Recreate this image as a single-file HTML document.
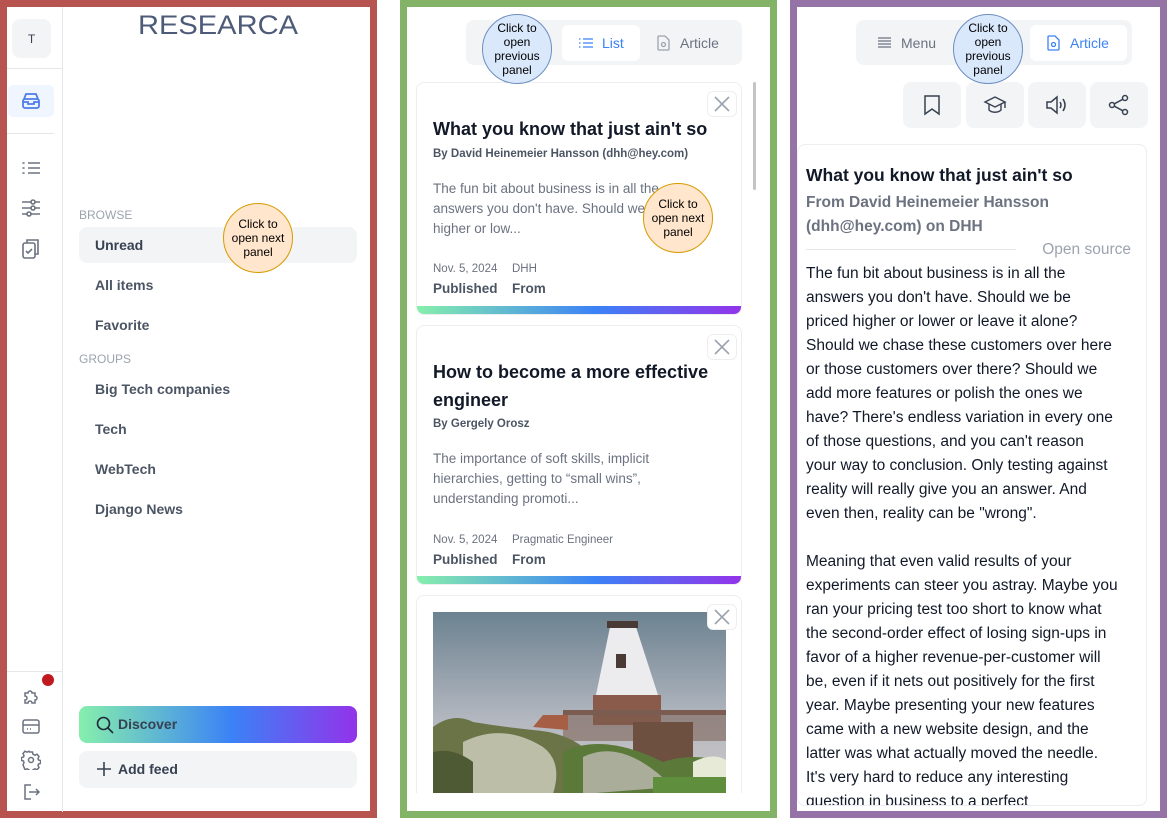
<!DOCTYPE html>
<html><head><meta charset="utf-8">
<style>
*{margin:0;padding:0;box-sizing:border-box}
body{width:1167px;height:819px;overflow:hidden;background:#fff;font-family:"Liberation Sans",sans-serif;position:relative}
.a{position:absolute}
.nw{white-space:nowrap}
.frame{position:absolute;border:7px solid}
.tip{position:absolute;width:70px;height:70px;border-radius:50%;display:flex;align-items:center;justify-content:center;text-align:center;font-size:12px;line-height:14px;color:#000}
.or{background:#ffe6cc;border:1px solid #d79b00}
.bl{background:#dae8fc;border:1px solid #6c8ebf}
.nav{position:absolute;left:95px;font-size:14px;font-weight:bold;color:#4b5563}
.sec{position:absolute;left:79px;font-size:12px;color:#9ca3af}
.card{position:absolute;left:416px;width:326px;border:1px solid #eceef1;border-radius:8px;overflow:hidden;background:#fff}
.bar{position:absolute;left:0;right:0;bottom:0;height:8px;background:linear-gradient(90deg,#86efac,#3b82f6 55%,#9333ea)}
.x{position:absolute;width:30px;height:26px;border:1px solid #eee;border-radius:6px;background:#fff}
.ib{position:absolute;top:82px;width:58px;height:46px;background:#f3f4f6;border-radius:8px;display:flex;align-items:center;justify-content:center}
.body p{font-size:15.5px;line-height:24px;color:#111827;white-space:nowrap}
</style></head><body>
<div class="frame" style="left:0;top:0;width:377px;height:818px;border-color:#b85450"></div>
<div class="frame" style="left:400px;top:0;width:377px;height:818px;border-color:#82b366"></div>
<div class="frame" style="left:790px;top:0;width:377px;height:818px;border-color:#9673a6"></div>

<!-- LEFT rail -->
<div class="a" style="left:62px;top:7px;width:1px;height:805px;background:#e5e7eb"></div>
<div class="a" style="left:12px;top:19px;width:39px;height:39px;background:#f3f4f6;border-radius:8px;font-size:12px;color:#374151;display:flex;align-items:center;justify-content:center">T</div>
<div class="a" style="left:7px;top:68px;width:55px;height:1px;background:#e5e7eb"></div>
<div class="a" style="left:8px;top:85px;width:46px;height:32px;background:#eff6ff;border-radius:5px"></div>
<svg class="a" style="left:21px;top:92px" width="20" height="18" viewBox="0 0 20 18" fill="none" stroke="#4f7ce8" stroke-width="1.8"><path d="M3 7 L5 2 H15 L17 7"/><rect x="2" y="7" width="16" height="9" rx="2"/><path d="M2 10 H7 V12 H13 V10 H18"/></svg>
<div class="a" style="left:7px;top:133px;width:47px;height:1px;background:#e5e7eb"></div>
<svg class="a" style="left:21px;top:160px" width="20" height="16" fill="none" stroke="#6b7280" stroke-width="1.6"><path d="M7 3H19M7 8H19M7 13H19"/><path d="M2 3h1M2 8h1M2 13h1" stroke-linecap="round"/></svg>
<svg class="a" style="left:21px;top:199px" width="20" height="18" fill="none" stroke="#6b7280" stroke-width="1.6"><path d="M1 3H19M1 9H19M1 15H19"/><circle cx="12" cy="3" r="2" fill="#fff"/><circle cx="12" cy="9" r="2" fill="#fff"/><circle cx="8" cy="15" r="2" fill="#fff"/></svg>
<svg class="a" style="left:21px;top:237px" width="20" height="24" fill="none" stroke="#6b7280" stroke-width="1.6"><rect x="2" y="6" width="12" height="15" rx="2"/><path d="M6 6V3h11v14h-3"/><path d="M5 14l2 2 4-4"/></svg>
<div class="a" style="left:7px;top:671px;width:55px;height:1px;background:#e5e7eb"></div>
<div class="a" style="left:42px;top:674px;width:12px;height:12px;border-radius:50%;background:#c0191f"></div>
<svg class="a" style="left:21px;top:686px" width="20" height="20" fill="none" stroke="#6b7280" stroke-width="1.5"><path d="M4 7h3a2 2 0 1 1 4 0h3v3a2 2 0 1 1 0 4v3h-3a2 2 0 1 0-4 0H4v-3a2 2 0 1 0 0-4z"/></svg>
<svg class="a" style="left:21px;top:718px" width="20" height="18" fill="none" stroke="#6b7280" stroke-width="1.5"><rect x="2" y="2" width="16" height="13" rx="2"/><path d="M2 7H18M6 11h1M9 11h1"/></svg>
<svg class="a" style="left:21px;top:750px" width="20" height="20" fill="none" stroke="#6b7280" stroke-width="1.5"><circle cx="10" cy="10" r="2.5"/><path d="M8.5 2h3l.5 2.2 2 1 2-1 2 2.3-1 2 .5 1.5 2 .5v3l-2 .5-.5 1.5 1 2-2 2.3-2-1-2 1-.5 2.2h-3l-.5-2.2-2-1-2 1L2 14.8l1-2L2.5 11 .5 10.5v-3l2-.5L3 5.5 2 3.5 4 1.2l2 1 2-1z"/></svg>
<svg class="a" style="left:21px;top:782px" width="20" height="20" fill="none" stroke="#6b7280" stroke-width="1.5"><path d="M10 3H4v14h6M8 10h10M15 7l3 3-3 3"/></svg>

<!-- LEFT main -->
<svg class="a" style="left:136px;top:10px" width="166" height="32"><text x="2" y="28" font-family="Liberation Sans, sans-serif" font-size="32" fill="#4d5b78" textLength="160" lengthAdjust="spacingAndGlyphs" transform="scale(1,0.85)" style="font-weight:normal">RESEARCA</text></svg>
<div class="sec" style="top:208px">BROWSE</div>
<div class="a" style="left:79px;top:227px;width:278px;height:36px;background:#f3f4f6;border-radius:8px"></div>
<div class="nav" style="top:237px;color:#374151">Unread</div>
<div class="nav" style="top:277px">All items</div>
<div class="nav" style="top:317px">Favorite</div>
<div class="sec" style="top:352px">GROUPS</div>
<div class="nav" style="top:381px">Big Tech companies</div>
<div class="nav" style="top:421px">Tech</div>
<div class="nav" style="top:461px">WebTech</div>
<div class="nav" style="top:501px">Django News</div>
<div class="a" style="left:79px;top:706px;width:278px;height:37px;border-radius:8px;background:linear-gradient(90deg,#86efac,#3b82f6 55%,#9333ea)"></div>
<svg class="a" style="left:96px;top:716px" width="18" height="18" fill="none" stroke="#1f2937" stroke-width="1.6"><circle cx="7.5" cy="7.5" r="6"/><path d="M12 12l5 5"/></svg>
<div class="a nw" style="left:118px;top:716px;font-size:14px;font-weight:bold;color:#374151">Discover</div>
<div class="a" style="left:79px;top:751px;width:278px;height:37px;border-radius:8px;background:#f3f4f6"></div>
<svg class="a" style="left:96px;top:761px" width="16" height="16" fill="none" stroke="#374151" stroke-width="1.6"><path d="M8 1v14M1 8h14"/></svg>
<div class="a nw" style="left:118px;top:761px;font-size:14px;font-weight:bold;color:#374151">Add feed</div>
<div class="tip or" style="left:223px;top:203px">Click to<br>open next<br>panel</div>

<!-- MIDDLE -->
<div class="a" style="left:466px;top:20px;width:276px;height:45px;background:#f3f4f6;border-radius:8px"></div>
<div class="a" style="left:562px;top:25px;width:78px;height:36px;background:#fff;border-radius:6px"></div>
<svg class="a" style="left:579px;top:37px" width="14" height="12" fill="none" stroke="#3b82f6" stroke-width="1.3"><path d="M4 2h10M4 6h10M4 10h10M0 2h1.5M0 6h1.5M0 10h1.5"/></svg>
<div class="a nw" style="left:602px;top:35px;font-size:14px;color:#3b82f6">List</div>
<svg class="a" style="left:657px;top:35px" width="13" height="16" fill="none" stroke="#9ca3af" stroke-width="1.3"><path d="M2 1h6l4 4v9a1 1 0 0 1-1 1H2a1 1 0 0 1-1-1V2a1 1 0 0 1 1-1z"/><circle cx="6.5" cy="9.5" r="2"/></svg>
<div class="a nw" style="left:680px;top:35px;font-size:14px;color:#6b7280">Article</div>
<div class="a" style="left:753px;top:82px;width:3px;height:108px;background:#c4c4c4;border-radius:2px"></div>

<div class="card" style="top:82px;height:233px">
  <div class="x" style="left:290px;top:8px"></div>
  <svg class="a" style="left:297px;top:13px" width="16" height="16" stroke="#9ca3af" stroke-width="1.6"><path d="M1 1l14 14M15 1L1 15"/></svg>
  <div class="a nw" style="left:16px;top:36px;font-size:18px;font-weight:bold;color:#111827">What you know that just ain't so</div>
  <div class="a nw" style="left:16px;top:65px;font-size:11.5px;font-weight:bold;color:#4b5563">By David Heinemeier Hansson (dhh@hey.com)</div>
  <div class="a nw" style="left:16px;top:96px;font-size:13.5px;line-height:20px;color:#6b7280">The fun bit about business is in all the<br>answers you don't have. Should we be priced<br>higher or low...</div>
  <div class="a nw" style="left:16px;top:180px;font-size:11.5px;color:#6b7280">Nov. 5, 2024</div>
  <div class="a nw" style="left:95px;top:180px;font-size:11.5px;color:#6b7280">DHH</div>
  <div class="a nw" style="left:16px;top:198px;font-size:13.5px;font-weight:bold;color:#4b5563">Published</div>
  <div class="a nw" style="left:95px;top:198px;font-size:13.5px;font-weight:bold;color:#4b5563">From</div>
  <div class="bar"></div>
</div>
<div class="card" style="top:325px;height:260px">
  <div class="x" style="left:290px;top:8px"></div>
  <svg class="a" style="left:297px;top:13px" width="16" height="16" stroke="#9ca3af" stroke-width="1.6"><path d="M1 1l14 14M15 1L1 15"/></svg>
  <div class="a nw" style="left:16px;top:32px;font-size:18px;line-height:28px;font-weight:bold;color:#111827">How to become a more effective<br>engineer</div>
  <div class="a nw" style="left:16px;top:92px;font-size:11.5px;font-weight:bold;color:#4b5563">By Gergely Orosz</div>
  <div class="a nw" style="left:16px;top:123px;font-size:13.5px;line-height:20px;color:#6b7280">The importance of soft skills, implicit<br>hierarchies, getting to “small wins”,<br>understanding promoti...</div>
  <div class="a nw" style="left:16px;top:208px;font-size:11.5px;color:#6b7280">Nov. 5, 2024</div>
  <div class="a nw" style="left:95px;top:208px;font-size:11.5px;color:#6b7280">Pragmatic Engineer</div>
  <div class="a nw" style="left:16px;top:226px;font-size:13.5px;font-weight:bold;color:#4b5563">Published</div>
  <div class="a nw" style="left:95px;top:226px;font-size:13.5px;font-weight:bold;color:#4b5563">From</div>
  <div class="bar"></div>
</div>
<div class="card" style="top:595px;height:198px;border-bottom:none;border-radius:8px 8px 0 0">
  <svg class="a" style="left:16px;top:16px" width="293" height="182" viewBox="0 0 293 182">
    <defs><linearGradient id="sk" x1="0" y1="0" x2="0" y2="1"><stop offset="0" stop-color="#6c8290"/><stop offset="0.6" stop-color="#b4b8c0"/><stop offset="1" stop-color="#cfc8c8"/></linearGradient></defs>
    <rect width="293" height="182" fill="url(#sk)"/>
    <path d="M177 15 L203 15 L225 83 L163 83 Z" fill="#ececee"/>
    <path d="M174 9h31v7h-31z" fill="#4a3a36"/>
    <rect x="183" y="42" width="10" height="14" fill="#4a3a36"/>
    <rect x="160" y="83" width="68" height="30" fill="#8a5b4b"/>
    <path d="M130 98h172v5H130z" fill="#7a5c50"/>
    <path d="M130 103h172v26H130z" fill="#7a5c50" opacity=".55"/>
    <path d="M100 115l10-12 25 0 0 15z" fill="#a65e45"/>
    <rect x="200" y="110" width="60" height="70" fill="#6e5040"/>
    <path d="M0 115 Q20 100 40 110 Q70 115 100 118 Q130 120 150 135 Q160 150 140 182 H0Z" fill="#6a7446"/>
    <path d="M30 130 Q70 110 110 135 Q130 150 120 182 H30Z" fill="#bcbea8"/>
    <path d="M0 140 Q20 135 40 150 L40 182 H0Z" fill="#4e5a34"/>
    <path d="M130 140 Q170 120 230 150 Q260 140 293 150 V182 H130Z" fill="#5b7a3a"/>
    <path d="M150 145 Q190 125 240 175 L150 182Z" fill="#a9ad9a"/>
    <path d="M260 150 Q280 140 293 148 V165 H260Z" fill="#e8ead8"/>
    <path d="M220 165 H293 V182 H220Z" fill="#5f8e3c"/>
  </svg>
  <div class="x" style="left:290px;top:8px"></div>
  <svg class="a" style="left:297px;top:13px" width="16" height="16" stroke="#9ca3af" stroke-width="1.6"><path d="M1 1l14 14M15 1L1 15"/></svg>
</div>
<div class="tip bl" style="left:482px;top:14px">Click to<br>open<br>previous<br>panel</div>
<div class="tip or" style="left:643px;top:183px">Click to<br>open next<br>panel</div>

<!-- RIGHT -->
<div class="a" style="left:856px;top:20px;width:276px;height:45px;background:#f3f4f6;border-radius:8px"></div>
<svg class="a" style="left:878px;top:37px" width="13" height="11" fill="none" stroke="#6b7280" stroke-width="1.2"><path d="M0 1h13M0 4h13M0 7h13M0 10h13"/></svg>
<div class="a nw" style="left:901px;top:35px;font-size:14px;color:#6b7280">Menu</div>
<div class="a" style="left:1030px;top:25px;width:97px;height:36px;background:#fff;border-radius:6px"></div>
<svg class="a" style="left:1047px;top:35px" width="13" height="16" fill="none" stroke="#3b82f6" stroke-width="1.3"><path d="M2 1h6l4 4v9a1 1 0 0 1-1 1H2a1 1 0 0 1-1-1V2a1 1 0 0 1 1-1z"/><circle cx="6.5" cy="9.5" r="2"/></svg>
<div class="a nw" style="left:1070px;top:35px;font-size:14px;color:#3b82f6">Article</div>
<div class="ib" style="left:903px"><svg width="20" height="22" fill="none" stroke="#374151" stroke-width="1.5"><path d="M3 2h14v18l-7-5-7 5z"/></svg></div>
<div class="ib" style="left:966px"><svg width="24" height="20" fill="none" stroke="#374151" stroke-width="1.4"><path d="M2 7l10-5 10 5-10 5z"/><path d="M6 9v6c3 3 9 3 12 0V9M22 7v6"/></svg></div>
<div class="ib" style="left:1028px"><svg width="24" height="22" fill="none" stroke="#374151" stroke-width="1.5"><path d="M2 8h4l6-5v16l-6-5H2z"/><path d="M15 8q2 3 0 6M18 5q4 6 0 12"/></svg></div>
<div class="ib" style="left:1090px"><svg width="22" height="22" fill="none" stroke="#374151" stroke-width="1.5"><circle cx="17" cy="4" r="2.5"/><circle cx="4" cy="11" r="2.5"/><circle cx="17" cy="18" r="2.5"/><path d="M6.3 9.8l8.5-4.5M6.3 12.2l8.5 4.5"/></svg></div>
<div class="a" style="left:797px;top:144px;width:350px;height:662px;border:1px solid #eceef1;border-radius:8px;overflow:hidden">
  <div class="a nw" style="left:8px;top:20px;font-size:17.5px;font-weight:bold;color:#111827">What you know that just ain't so</div>
  <div class="a nw" style="left:8px;top:46px;font-size:15.5px;line-height:24px;font-weight:bold;color:#6b7280">From David Heinemeier Hansson<br>(dhh@hey.com) on DHH</div>
  <div class="a" style="left:8px;top:104px;width:210px;height:1px;background:#e5e7eb"></div>
  <div class="a nw" style="right:15px;top:96px;font-size:15.5px;color:#9ca3af">Open source</div>
  <div class="a body" style="left:8px;top:117px">
   <p>The fun bit about business is in all the<br>answers you don't have. Should we be<br>priced higher or lower or leave it alone?<br>Should we chase these customers over here<br>or those customers over there? Should we<br>add more features or polish the ones we<br>have? There's endless variation in every one<br>of those questions, and you can't reason<br>your way to conclusion. Only testing against<br>reality will really give you an answer. And<br>even then, reality can be "wrong".<br><br>Meaning that even valid results of your<br>experiments can steer you astray. Maybe you<br>ran your pricing test too short to know what<br>the second-order effect of losing sign-ups in<br>favor of a higher revenue-per-customer will<br>be, even if it nets out positively for the first<br>year. Maybe presenting your new features<br>came with a new website design, and the<br>latter was what actually moved the needle.<br>It's very hard to reduce any interesting<br>question in business to a perfect</p>
  </div>
</div>
<div class="tip bl" style="left:953px;top:14px">Click to<br>open<br>previous<br>panel</div>
</body></html>
